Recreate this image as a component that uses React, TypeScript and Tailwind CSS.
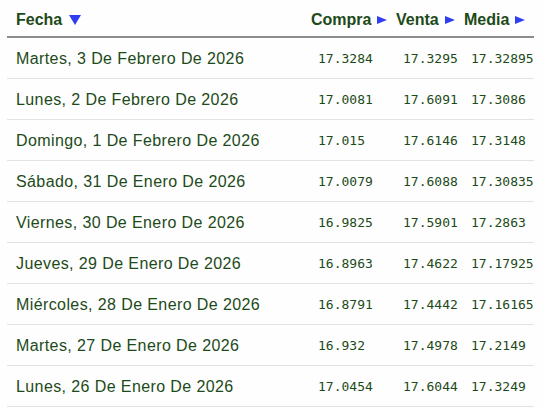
const rows: [string, string, string, string][] = [
  ["Martes, 3 De Febrero De 2026", "17.3284", "17.3295", "17.32895"],
  ["Lunes, 2 De Febrero De 2026", "17.0081", "17.6091", "17.3086"],
  ["Domingo, 1 De Febrero De 2026", "17.015", "17.6146", "17.3148"],
  ["Sábado, 31 De Enero De 2026", "17.0079", "17.6088", "17.30835"],
  ["Viernes, 30 De Enero De 2026", "16.9825", "17.5901", "17.2863"],
  ["Jueves, 29 De Enero De 2026", "16.8963", "17.4622", "17.17925"],
  ["Miércoles, 28 De Enero De 2026", "16.8791", "17.4442", "17.16165"],
  ["Martes, 27 De Enero De 2026", "16.932", "17.4978", "17.2149"],
  ["Lunes, 26 De Enero De 2026", "17.0454", "17.6044", "17.3249"],
];

function ArrowDown() {
  return (
    <svg width="12" height="10" viewBox="0 0 12 10" className="ml-[7px] inline-block">
      <polygon points="0,0 12,0 6,10" fill="#2f3ff0" />
    </svg>
  );
}

function ArrowRight() {
  return (
    <svg width="10" height="8" viewBox="0 0 10 8" className="ml-[6px] inline-block">
      <polygon points="0,0 10,4 0,8" fill="#2f3ff0" />
    </svg>
  );
}

const cols = "grid grid-cols-[296px_85px_68px_78px]";

export default function App() {
  return (
    <div className="min-h-[410px] bg-[#fefefe] pl-[7px] font-['Liberation_Sans',Arial,sans-serif] text-[#1d4a19]">
      <div className="w-[527px]">
        <div className={`${cols} h-[38px] border-b-2 border-[#8c8c8c] text-[16px] font-bold leading-[18px]`}>
          <div className="flex items-center pl-[9px] pt-[4px]">
            Fecha
            <ArrowDown />
          </div>
          {["Compra", "Venta", "Media"].map((h) => (
            <div key={h} className="flex items-center pl-2 pt-[4px] whitespace-nowrap">
              {h}
              <ArrowRight />
            </div>
          ))}
        </div>
        {rows.map(([date, compra, venta, media]) => (
          <div key={date} className={`${cols} h-[41px] border-b border-[#e2e2e2]`}>
            <div className="flex items-center pl-[9px] pt-px text-[16px] tracking-[0.4px]">{date}</div>
            {[compra, venta, media].map((n, i) => (
              <div
                key={i}
                className="flex items-center pl-[15px] pt-px font-['DejaVu_Sans_Mono',monospace] text-[13px]"
              >
                {n}
              </div>
            ))}
          </div>
        ))}
      </div>
    </div>
  );
}
